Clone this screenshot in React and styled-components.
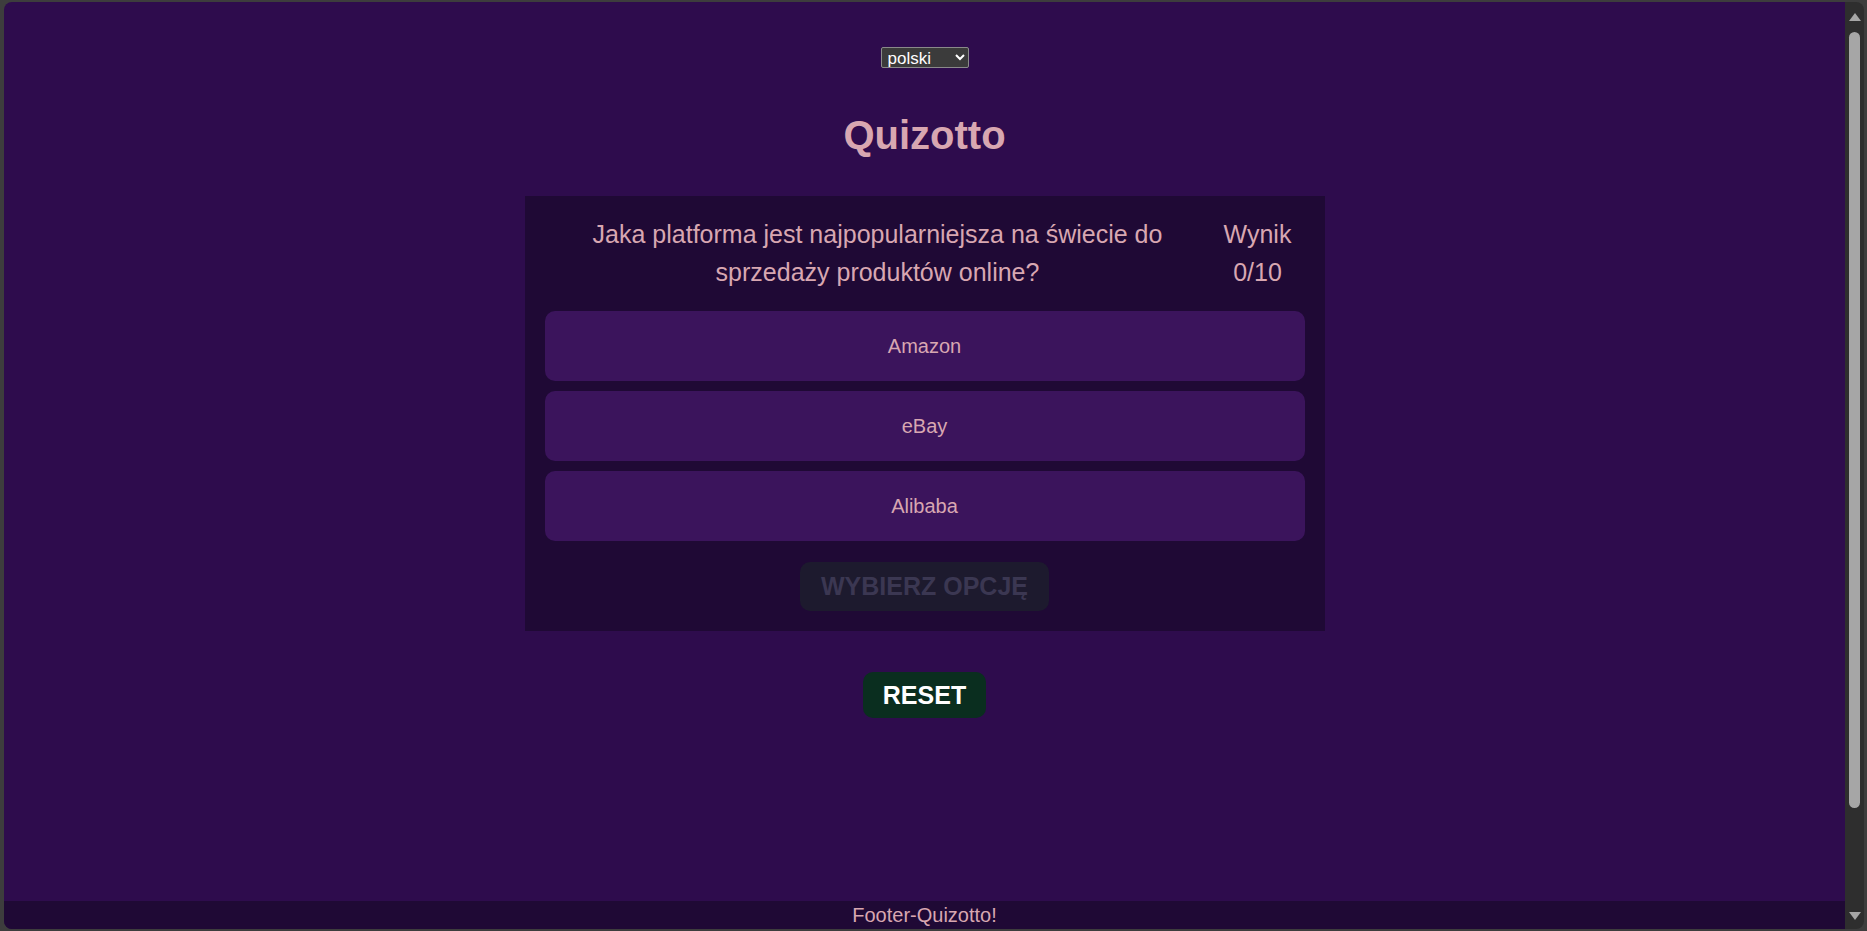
import React, { useState } from "react";
import styled, { createGlobalStyle } from "styled-components";

const GlobalStyle = createGlobalStyle`
  html, body {
    margin: 0;
    padding: 0;
    background: #3d3d3d;
    font-family: "Liberation Sans", Arial, sans-serif;
  }
  * {
    box-sizing: border-box;
  }
`;

const WindowFrame = styled.div`
  width: 1867px;
  height: 931px;
  display: flex;
  padding: 2px 3px 2px 4px;
  background: #3d3d3d;
`;
const Viewport = styled.div`
  flex: 1;
  display: flex;
  border-radius: 8px;
  overflow: hidden;
`;
const Page = styled.div`
  flex: 1;
  display: flex;
  flex-direction: column;
  align-items: center;
  background: #2e0c4d;
  color: #d8a7b1;
`;
const LangSelect = styled.select`
  margin-top: 45px;
  width: 88px;
  height: 21px;
  font-family: "Liberation Sans", Arial, sans-serif;
  font-size: 17px;
  color: #ffffff;
  background: #3b3b3b;
  border: 1px solid #8a8a8a;
  border-radius: 2px;
  color-scheme: dark;
  padding: 0 2px;
`;
const Title = styled.h1`
  margin: 44px 0 38px;
  font-size: 40px;
  line-height: 46px;
  font-weight: bold;
  color: #d8a7b1;
`;
const QuizCard = styled.div`
  width: 800px;
  padding: 20px;
  background: #1f0935;
  display: flex;
  flex-direction: column;
  align-items: center;
`;
const QuestionHeader = styled.div`
  width: 100%;
  display: flex;
  font-size: 25px;
  line-height: 37.5px;
  margin-bottom: 20px;
`;
const QuestionText = styled.div`
  flex: 1;
  text-align: center;
`;
const Score = styled.div`
  width: 94px;
  text-align: center;
`;
const Options = styled.div`
  width: 100%;
  display: flex;
  flex-direction: column;
  gap: 10px;
`;
const OptionButton = styled.button`
  height: 70px;
  width: 100%;
  border: none;
  border-radius: 10px;
  background: ${(p) => (p.$selected ? "#55207f" : "#3b145c")};
  color: #d8a7b1;
  font-family: "Liberation Sans", Arial, sans-serif;
  font-size: 20px;
  cursor: pointer;
`;
const SubmitButton = styled.button`
  margin-top: 21px;
  padding: 10px 21px;
  border: none;
  border-radius: 10px;
  background: ${(p) => (p.disabled ? "#1d1a2e" : "#5b2a86")};
  color: ${(p) => (p.disabled ? "#3b3752" : "#ffffff")};
  font-family: "Liberation Sans", Arial, sans-serif;
  font-size: 25px;
  line-height: 29px;
  font-weight: bold;
`;
const ResetButton = styled.button`
  margin-top: 41px;
  padding: 9px 20px;
  border: none;
  border-radius: 10px;
  background: #0a2e1f;
  color: #ffffff;
  font-family: "Liberation Sans", Arial, sans-serif;
  font-size: 25px;
  line-height: 28px;
  font-weight: bold;
  cursor: pointer;
`;
const Footer = styled.footer`
  margin-top: auto;
  width: 100%;
  height: 28px;
  background: #1f0935;
  text-align: center;
  font-size: 20px;
  line-height: 28px;
`;
const Scrollbar = styled.div`
  width: 19px;
  background: #2e2e2e;
  display: flex;
  flex-direction: column;
  align-items: center;
`;
const Arrow = styled.div`
  width: 0;
  height: 0;
  border-left: 6px solid transparent;
  border-right: 6px solid transparent;
  ${(p) =>
    p.$down
      ? "border-top: 8px solid #a6a6a6; margin-top: auto; margin-bottom: 9px;"
      : "border-bottom: 8px solid #a6a6a6; margin-top: 11px;"}
`;
const Thumb = styled.div`
  width: 11px;
  height: 776px;
  margin-top: 11px;
  border-radius: 6px;
  background: #a6a6a6;
`;

const answers = ["Amazon", "eBay", "Alibaba"];

const App = () => {
  const [selected, setSelected] = useState(null);

  return (
    <WindowFrame>
      <GlobalStyle />
      <Viewport>
        <Page>
          <LangSelect defaultValue="pl">
            <option value="pl">polski</option>
            <option value="en">English</option>
          </LangSelect>
          <Title>Quizotto</Title>
          <QuizCard>
            <QuestionHeader>
              <QuestionText>
                Jaka platforma jest najpopularniejsza na świecie do sprzedaży
                produktów online?
              </QuestionText>
              <Score>
                Wynik
                <br />
                0/10
              </Score>
            </QuestionHeader>
            <Options>
              {answers.map((a, i) => (
                <OptionButton
                  key={`answer-` + i}
                  $selected={selected === i}
                  onClick={() => setSelected(i)}
                >
                  {a}
                </OptionButton>
              ))}
            </Options>
            <SubmitButton disabled={selected === null}>WYBIERZ OPCJĘ</SubmitButton>
          </QuizCard>
          <ResetButton onClick={() => setSelected(null)}>RESET</ResetButton>
          <Footer>Footer-Quizotto!</Footer>
        </Page>
        <Scrollbar>
          <Arrow />
          <Thumb />
          <Arrow $down />
        </Scrollbar>
      </Viewport>
    </WindowFrame>
  );
};

export default App;
